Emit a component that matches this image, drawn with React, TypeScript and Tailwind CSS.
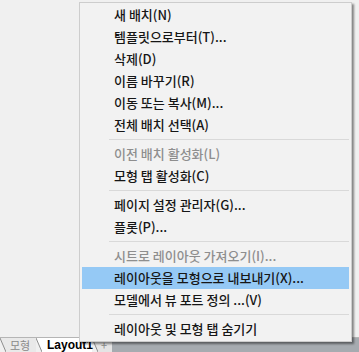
type Item =
  | { kind: "item"; label: string; disabled?: boolean; active?: boolean }
  | { kind: "sep" };

const items: Item[] = [
  { kind: "item", label: "새 배치(N)" },
  { kind: "item", label: "템플릿으로부터(T)..." },
  { kind: "item", label: "삭제(D)" },
  { kind: "item", label: "이름 바꾸기(R)" },
  { kind: "item", label: "이동 또는 복사(M)..." },
  { kind: "item", label: "전체 배치 선택(A)" },
  { kind: "sep" },
  { kind: "item", label: "이전 배치 활성화(L)", disabled: true },
  { kind: "item", label: "모형 탭 활성화(C)" },
  { kind: "sep" },
  { kind: "item", label: "페이지 설정 관리자(G)..." },
  { kind: "item", label: "플롯(P)..." },
  { kind: "sep" },
  { kind: "item", label: "시트로 레이아웃 가져오기(I)...", disabled: true },
  { kind: "item", label: "레이아웃을 모형으로 내보내기(X)...", active: true },
  { kind: "item", label: "모델에서 뷰 포트 정의 ...(V)" },
  { kind: "sep" },
  { kind: "item", label: "레이아웃 및 모형 탭 숨기기" },
];

function Slant({ fill = "#e9e9e9" }: { fill?: string }) {
  return (
    <svg width="6" height="14" viewBox="0 0 6 14" className="shrink-0">
      <polygon points="0,0 6,14 6,0" fill={fill} />
      <line x1="0" y1="0" x2="6" y2="14" stroke="#8e8e8e" strokeWidth="1" />
    </svg>
  );
}

export default function App() {
  return (
    <div
      className="relative flex h-[352px] w-[359px] flex-col overflow-hidden bg-[#f0f0f0]"
      style={{ fontFamily: '"Noto Sans CJK KR", "Noto Sans", sans-serif' }}
    >
      {/* canvas area */}
      <div className="flex-1" />

      {/* layout tabs */}
      <div className="flex h-[15px] items-start border-t border-[#b5b5b5] text-[11px] leading-[14px]">
        <Slant />
        <div className="w-[30px] bg-[#e9e9e9] pl-[4px] text-[#8a8a8a]">모형</div>
        <Slant fill="#ffffff" />
        <div
          className="w-[50px] bg-white pl-[5px] text-[12px] font-bold text-black"
          style={{ fontFamily: '"Liberation Sans", Arial, sans-serif' }}
        >
          Layout1
        </div>
        <Slant fill="#e4e4e4" />
        <div className="w-[14px] bg-[#e4e4e4] pl-[3px] text-[#8a8a8a]">+</div>
        <div className="h-full flex-1 bg-[#a6abb0]" />
      </div>

      {/* context menu */}
      <div className="absolute left-[79px] top-[2px] w-[273px] border border-[#cdcdcd] bg-[#f2f2f2] py-[1px] shadow-[2px_2px_2px_rgba(0,0,0,0.45)]">
        {items.map((it, i) =>
          it.kind === "sep" ? (
            <div key={i} className="flex h-[7px] items-center pl-[29px] pr-[2px]">
              <div className="h-px w-full bg-[#d9d9d9]" />
            </div>
          ) : (
            <div
              key={i}
              className={`mx-[2px] flex h-[22px] items-center pl-[32px] text-[13px] font-medium ${
                it.active ? "bg-[#95c9f5]" : ""
              } ${it.disabled ? "text-[#8e8e8e]" : "text-[#161616]"}`}
            >
              {it.label}
            </div>
          )
        )}
      </div>
    </div>
  );
}
